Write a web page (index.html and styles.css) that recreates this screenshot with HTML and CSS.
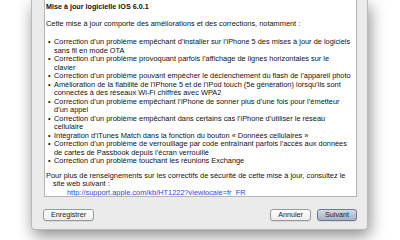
FILE: index.html
```html
<!DOCTYPE html>
<html lang="fr">
<head>
  <meta charset="UTF-8">
  <title>Mise à jour logicielle</title>
  <link rel="stylesheet" href="styles.css">
</head>
<body>
  <div class="window">
    <div class="notes">
      <h1>Mise à jour logicielle iOS 6.0.1</h1>
      <p class="intro">Cette mise à jour comporte des améliorations et des corrections, notamment :</p>
      <ul>
        <li>Correction d’un problème empêchant d’installer sur l’iPhone 5 des mises à jour de logiciels<br>sans fil en mode OTA</li>
        <li>Correction d’un problème provoquant parfois l’affichage de lignes horizontales sur le<br>clavier</li>
        <li>Correction d’un problème pouvant empêcher le déclenchement du flash de l’appareil photo</li>
        <li>Amélioration de la fiabilité de l’iPhone 5 et de l’iPod touch (5e génération) lorsqu’ils sont<br>connectés à des réseaux Wi-Fi chiffrés avec WPA2</li>
        <li>Correction d’un problème empêchant l’iPhone de sonner plus d’une fois pour l’émetteur<br>d’un appel</li>
        <li>Correction d’un problème empêchant dans certains cas l’iPhone d’utiliser le réseau<br>cellulaire</li>
        <li>Intégration d’iTunes Match dans la fonction du bouton « Données cellulaires »</li>
        <li>Correction d’un problème de verrouillage par code entraînant parfois l’accès aux données<br>de cartes de Passbook depuis l’écran verrouillé</li>
        <li>Correction d’un problème touchant les réunions Exchange</li>
      </ul>
      <p class="more">Pour plus de renseignements sur les correctifs de sécurité de cette mise à jour, consultez le<br>site web suivant :</p>
      <a class="link" href="#">http://support.apple.com/kb/HT1222?viewlocale=fr_FR</a>
    </div>
    <div class="actions">
      <button class="btn">Enregistrer</button>
      <span class="spacer"></span>
      <button class="btn">Annuler</button>
      <button class="btn default">Suivant</button>
    </div>
  </div>
</body>
</html>
```
FILE: styles.css
```css
* { box-sizing: border-box; }
body {
  margin: 0;
  height: 240px;
  overflow: hidden;
  background: #fff;
  font-family: 'Liberation Sans', Arial, sans-serif;
  font-size: 7.4px;
  line-height: 8.5px;
  color: #111;
}
.window {
  margin-left: 31px;
  width: 337px;
  height: 230px;
  background: #ebebeb;
  border: 1px solid #b9b9b9;
  border-top: none;
  border-radius: 0 0 4px 4px;
  box-shadow: 2px 6px 16px rgba(0, 0, 0, 0.45);
  display: flex;
  flex-direction: column;
}
.notes {
  margin: 0 10px 0 12px;
  height: 197px;
  background: #fff;
  border: 1px solid #b4b4b4;
  border-top: none;
  padding: 3px 2px 0 1px;
  overflow: hidden;
  white-space: nowrap;
}
h1 {
  margin: 0;
  font-size: 7.2px;
  font-weight: bold;
}
.intro {
  margin: 8px 0 0;
}
ul {
  margin: 10px 0 0;
  padding-left: 8px;
  list-style: none;
}
li {
  position: relative;
}
li::before {
  content: '•';
  position: absolute;
  left: -6px;
}
.more {
  margin: 6px 0 0;
  padding-left: 7px;
  text-indent: -7px;
}
.link {
  display: block;
  padding-left: 21px;
  color: #3245e0;
}
.actions {
  display: flex;
  gap: 6px;
  margin: 12px 10px 0 11px;
}
.spacer { flex: 1; }
.btn {
  height: 12px;
  padding: 0 7px;
  font-family: inherit;
  font-size: 7.2px;
  line-height: 10px;
  color: #222;
  background: linear-gradient(#ffffff, #ececec);
  border: 1px solid #999;
  border-radius: 3px;
  box-shadow: 0 1px 0 rgba(0, 0, 0, 0.08);
}
.default {
  background: linear-gradient(#d3dae6, #a6b1c4);
  border-color: #6f788c;
}
```
